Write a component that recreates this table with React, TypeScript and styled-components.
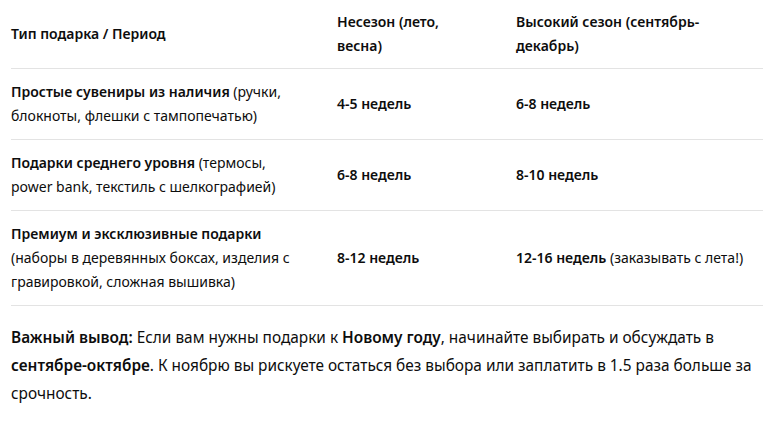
import React from 'react';
import styled, { createGlobalStyle } from 'styled-components';

const GlobalStyle = createGlobalStyle`
  html, body {
    margin: 0;
    padding: 0;
    background: #ffffff;
  }
  body {
    font-family: "Noto Sans", "Open Sans", sans-serif;
    color: #0d0d0d;
  }
`;

const Page = styled.div`
  padding: 0 10px 0 11px;
`;

const Table = styled.div`
  display: grid;
  grid-template-columns: 326px 179px 1fr;
`;

const Cell = styled.div<{ $head?: boolean }>`
  font-size: 14px;
  line-height: 24px;
  font-weight: ${(p) => (p.$head ? 600 : 400)};
  padding: ${(p) => (p.$head ? '10px 32px 10px 0' : '11px 32px 11px 0')};
  border-bottom: 1px solid #e3e3e3;
  display: flex;
  align-items: center;

  &:nth-child(3n) {
    padding-right: 10px;
  }
`;

const Strong = styled.b`
  font-weight: 600;
`;

const Note = styled.p`
  margin: 18px 0 0;
  font-size: 15.4px;
  line-height: 28px;
`;

type Row = {
  name: string;
  extra: string;
  off: string;
  high: string;
  highNote?: string;
};

const rows: Row[] = [
  {
    name: 'Простые сувениры из наличия',
    extra: ' (ручки, блокноты, флешки с тампопечатью)',
    off: '4-5 недель',
    high: '6-8 недель',
  },
  {
    name: 'Подарки среднего уровня',
    extra: ' (термосы, power bank, текстиль с шелкографией)',
    off: '6-8 недель',
    high: '8-10 недель',
  },
  {
    name: 'Премиум и эксклюзивные подарки',
    extra: ' (наборы в деревянных боксах, изделия с гравировкой, сложная вышивка)',
    off: '8-12 недель',
    high: '12-16 недель',
    highNote: ' (заказывать с лета!)',
  },
];

export default function App() {
  return (
    <Page>
      <GlobalStyle />
      <Table>
        <Cell $head>Тип подарка / Период</Cell>
        <Cell $head>Несезон (лето, весна)</Cell>
        <Cell $head>Высокий сезон (сентябрь-декабрь)</Cell>
        {rows.map((r) => (
          <React.Fragment key={r.name}>
            <Cell>
              <span>
                <Strong>{r.name}</Strong>
                {r.extra}
              </span>
            </Cell>
            <Cell>
              <Strong>{r.off}</Strong>
            </Cell>
            <Cell>
              <span>
                <Strong>{r.high}</Strong>
                {r.highNote}
              </span>
            </Cell>
          </React.Fragment>
        ))}
      </Table>
      <Note>
        <Strong>Важный вывод:</Strong> Если вам нужны подарки к <Strong>Новому году</Strong>,
        начинайте выбирать и обсуждать в <Strong>сентябре-октябре</Strong>. К ноябрю вы рискуете
        остаться без выбора или заплатить в 1.5 раза больше за срочность.
      </Note>
    </Page>
  );
}
